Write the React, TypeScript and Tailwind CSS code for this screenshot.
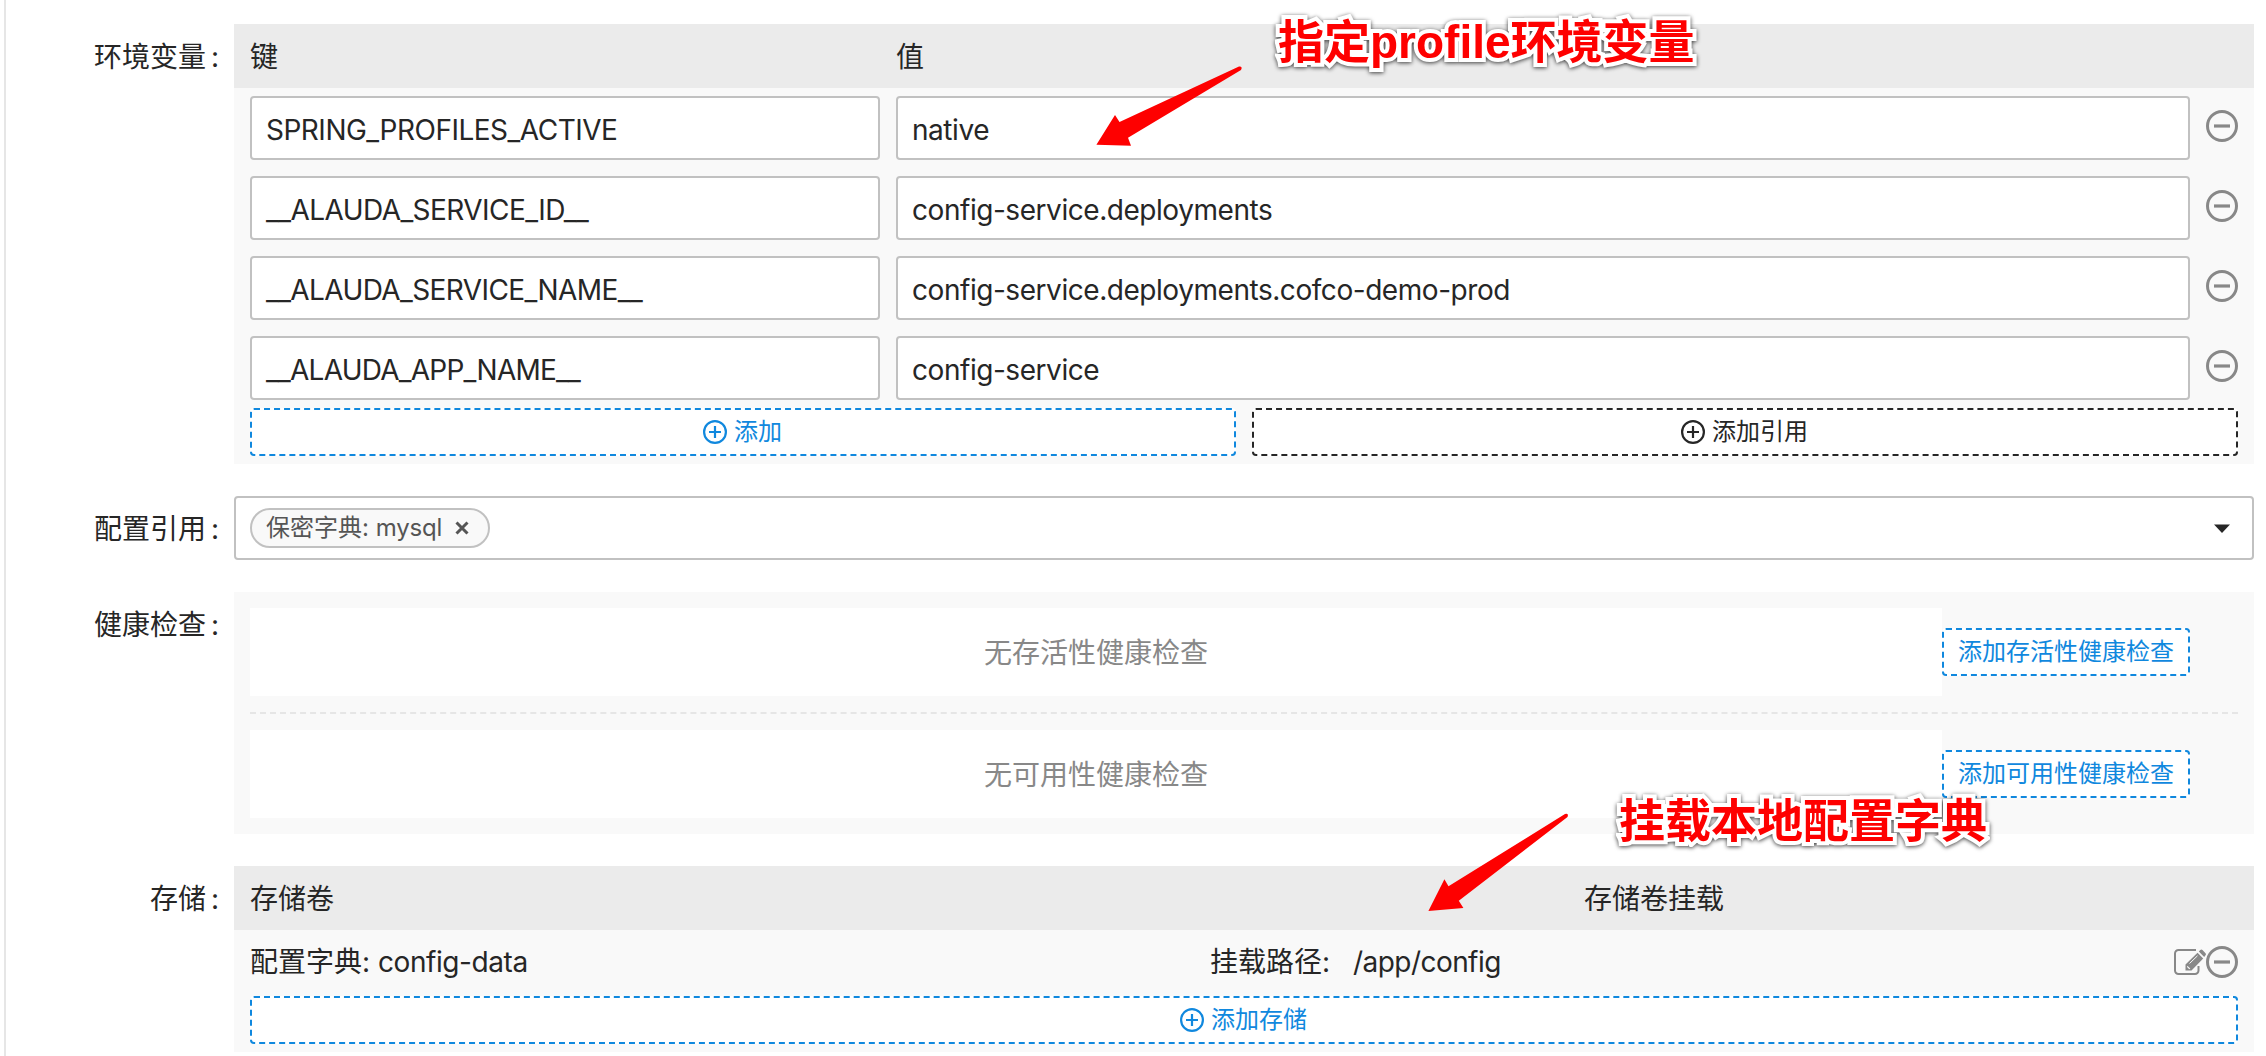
import React from "react";

const envVars = [
  { key: "SPRING_PROFILES_ACTIVE", value: "native", tracking: "tracking-[-0.5px]" },
  { key: "__ALAUDA_SERVICE_ID__", value: "config-service.deployments", tracking: "tracking-[-0.56px]" },
  { key: "__ALAUDA_SERVICE_NAME__", value: "config-service.deployments.cofco-demo-prod", tracking: "tracking-[-0.6px]" },
  { key: "__ALAUDA_APP_NAME__", value: "config-service", tracking: "tracking-[-0.76px]" },
];

const healthChecks = [
  { empty: "无存活性健康检查", action: "添加存活性健康检查" },
  { empty: "无可用性健康检查", action: "添加可用性健康检查" },
];

function MinusIcon() {
  return (
    <svg width="32" height="32" viewBox="0 0 32 32" fill="none" stroke="#888" className="shrink-0">
      <circle cx="16" cy="16" r="14.5" strokeWidth="3" />
      <path d="M8 16H24" strokeWidth="3.2" />
    </svg>
  );
}

function PlusIcon() {
  return (
    <svg width="24" height="24" viewBox="0 0 24 24" fill="none" stroke="currentColor" className="shrink-0">
      <circle cx="12" cy="12" r="10.9" strokeWidth="2.2" />
      <path d="M6 12H18M12 6V18" strokeWidth="2.2" />
    </svg>
  );
}

function EditIcon() {
  return (
    <svg width="32" height="26" viewBox="0 0 32 26" className="shrink-0">
      <path d="M22 1H4.5A3.5 3.5 0 0 0 1 4.5V21.5A3.5 3.5 0 0 0 4.5 25H21A3.5 3.5 0 0 0 24.5 21.5V17" fill="none" stroke="#888" strokeWidth="2" />
      <path d="M11.5 21.5V15.5L23.5 3.8L29.2 9.5L17.5 21.5Z" fill="#888" />
      <path d="M24.8 2.5L26.3 1A1.6 1.6 0 0 1 28.5 1L31.5 4.2A1.6 1.6 0 0 1 31.5 6.3L30.2 7.9Z" fill="#888" />
      <path d="M15.5 14.5L23.5 6.8" stroke="#f9f9f9" strokeWidth="1" />
      <path d="M13.3 16.8L16.3 19.6L15.3 20.2L13 18Z" fill="#f9f9f9" />
    </svg>
  );
}

function Row({ label, children }: { label: string; children: React.ReactNode }) {
  return (
    <div className="flex">
      <div className="w-[228px] shrink-0 pr-[15px] pt-[13px] text-right leading-10">
        {label}
        <span className="ml-[5px]">:</span>
      </div>
      <div className="w-[2020px] shrink-0">{children}</div>
    </div>
  );
}

function DashedButton({ label, icon, className }: { label: string; icon?: boolean; className: string }) {
  return (
    <button className={`flex h-12 items-center justify-center gap-[7px] rounded border-2 border-dashed bg-white text-2xl leading-none ${icon ? "pr-px" : ""} ${className}`}>
      {icon && <PlusIcon />}
      <span>{label}</span>
    </button>
  );
}

function Field({ text, className }: { text: string; className: string }) {
  return (
    <div className={`flex h-16 items-center rounded border-2 border-[#c1c1c1] bg-white pl-[14px] pt-[4px] ${className}`}>
      {text}
    </div>
  );
}

function Note({ text, className }: { text: string; className: string }) {
  return (
    <div
      className={`absolute whitespace-nowrap font-['Liberation_Sans','Noto_Sans_CJK_SC',sans-serif] text-[46px] font-bold leading-[56px] text-[#fe0000] drop-shadow-[0_1px_2px_rgba(0,0,0,0.75)] [-webkit-text-stroke:8px_white] [paint-order:stroke_fill] ${className}`}
    >
      {text}
    </div>
  );
}

export default function App() {
  return (
    <div className="relative h-[1056px] w-[2266px] overflow-hidden bg-white pl-1 font-[Inter,'Noto_Sans_CJK_SC',sans-serif] text-[28px] text-[#262626]">
      <div className="flex h-full flex-col gap-8 border-l-2 border-[#e6e6e6] pt-6">
        <Row label="环境变量">
          <div className="flex h-16 items-center bg-[#ebebeb] pl-4 pt-px">
            <span className="w-[646px]">键</span>
            <span>值</span>
          </div>
          <div className="bg-[#f9f9f9] px-4 py-2">
            <div className="flex flex-col gap-4">
              {envVars.map((v) => (
                <div key={v.key} className="flex gap-4">
                  <Field text={v.key} className={`w-[630px] ${v.tracking}`} />
                  <Field text={v.value} className="w-[1294px] tracking-[-0.45px]" />
                  <div className="pt-[14px]">
                    <MinusIcon />
                  </div>
                </div>
              ))}
            </div>
            <div className="mt-2 flex gap-4">
              <DashedButton icon label="添加" className="flex-1 border-[#1088de] text-[#1088de]" />
              <DashedButton icon label="添加引用" className="flex-1 border-[#262626]" />
            </div>
          </div>
        </Row>

        <Row label="配置引用">
          <div className="flex h-16 items-center justify-between rounded border-2 border-[#c1c1c1] bg-white pl-[14px] pr-[22px]">
            <div className="flex h-10 w-[240px] items-center rounded-full border-2 border-[#c1c1c1] bg-[#f9f9f9] pl-[14px] text-2xl leading-none text-[#555]">
              <span className="w-[189px] whitespace-nowrap">
                保密字典: <span className="tracking-[-0.2px]">mysql</span>
              </span>
              <svg width="14" height="14" viewBox="0 0 14 14" stroke="#555" strokeWidth="3">
                <path d="M1.5 1.5L12.5 12.5M12.5 1.5L1.5 12.5" />
              </svg>
            </div>
            <svg width="16" height="9" viewBox="0 0 16 9" fill="#262626">
              <path d="M0 0.5H16L8 9Z" />
            </svg>
          </div>
        </Row>

        <Row label="健康检查">
          <div className="flex flex-col gap-4 bg-[#f9f9f9] p-4">
            {healthChecks.map((h, i) => (
              <React.Fragment key={h.empty}>
                {i > 0 && <div className="border-t-2 border-dashed border-[#e6e6e6]" />}
                <div className="flex items-center">
                  <div className="flex h-[88px] w-[1692px] items-center justify-center bg-white pt-px text-[#888]">{h.empty}</div>
                  <DashedButton label={h.action} className="w-[248px] border-[#1088de] text-[#1088de]" />
                </div>
              </React.Fragment>
            ))}
          </div>
        </Row>

        <Row label="存储">
          <div className="flex h-16 items-center bg-[#ebebeb] pl-4 pt-px">
            <span className="w-[1334px]">存储卷</span>
            <span>存储卷挂载</span>
          </div>
          <div className="bg-[#f9f9f9] px-4 pb-2">
            <div className="flex h-[66px] items-center pb-[2px]">
              <span className="w-[960px]">
                配置字典: <span className="tracking-[-0.42px]">config-data</span>
              </span>
              <span className="w-[143px]">挂载路径:</span>
              <span className="flex-1 tracking-[-0.55px]">/app/config</span>
              <EditIcon />
              <MinusIcon />
            </div>
            <DashedButton icon label="添加存储" className="w-full border-[#1088de] text-[#1088de]" />
          </div>
        </Row>
      </div>

      <svg className="absolute left-[1090px] top-[60px]" width="160" height="92" viewBox="1090 60 160 92" fill="#fe0000">
        <path d="M1096.4 144.7L1115 115L1119.5 122L1239 66.5Q1243 66 1241 70L1128 137.7L1131 145.7Z" />
      </svg>
      <svg className="absolute left-[1420px] top-[806px]" width="156" height="112" viewBox="1420 806 156 112" fill="#fe0000">
        <path d="M1428.4 911L1444.4 879.3L1448.5 886.3L1565 814Q1569 813 1567.5 817L1458.8 900.7L1463.4 908Z" />
      </svg>
      <Note text="指定profile环境变量" className="left-[1278px] top-[14px]" />
      <Note text="挂载本地配置字典" className="left-[1619px] top-[793px]" />
    </div>
  );
}
